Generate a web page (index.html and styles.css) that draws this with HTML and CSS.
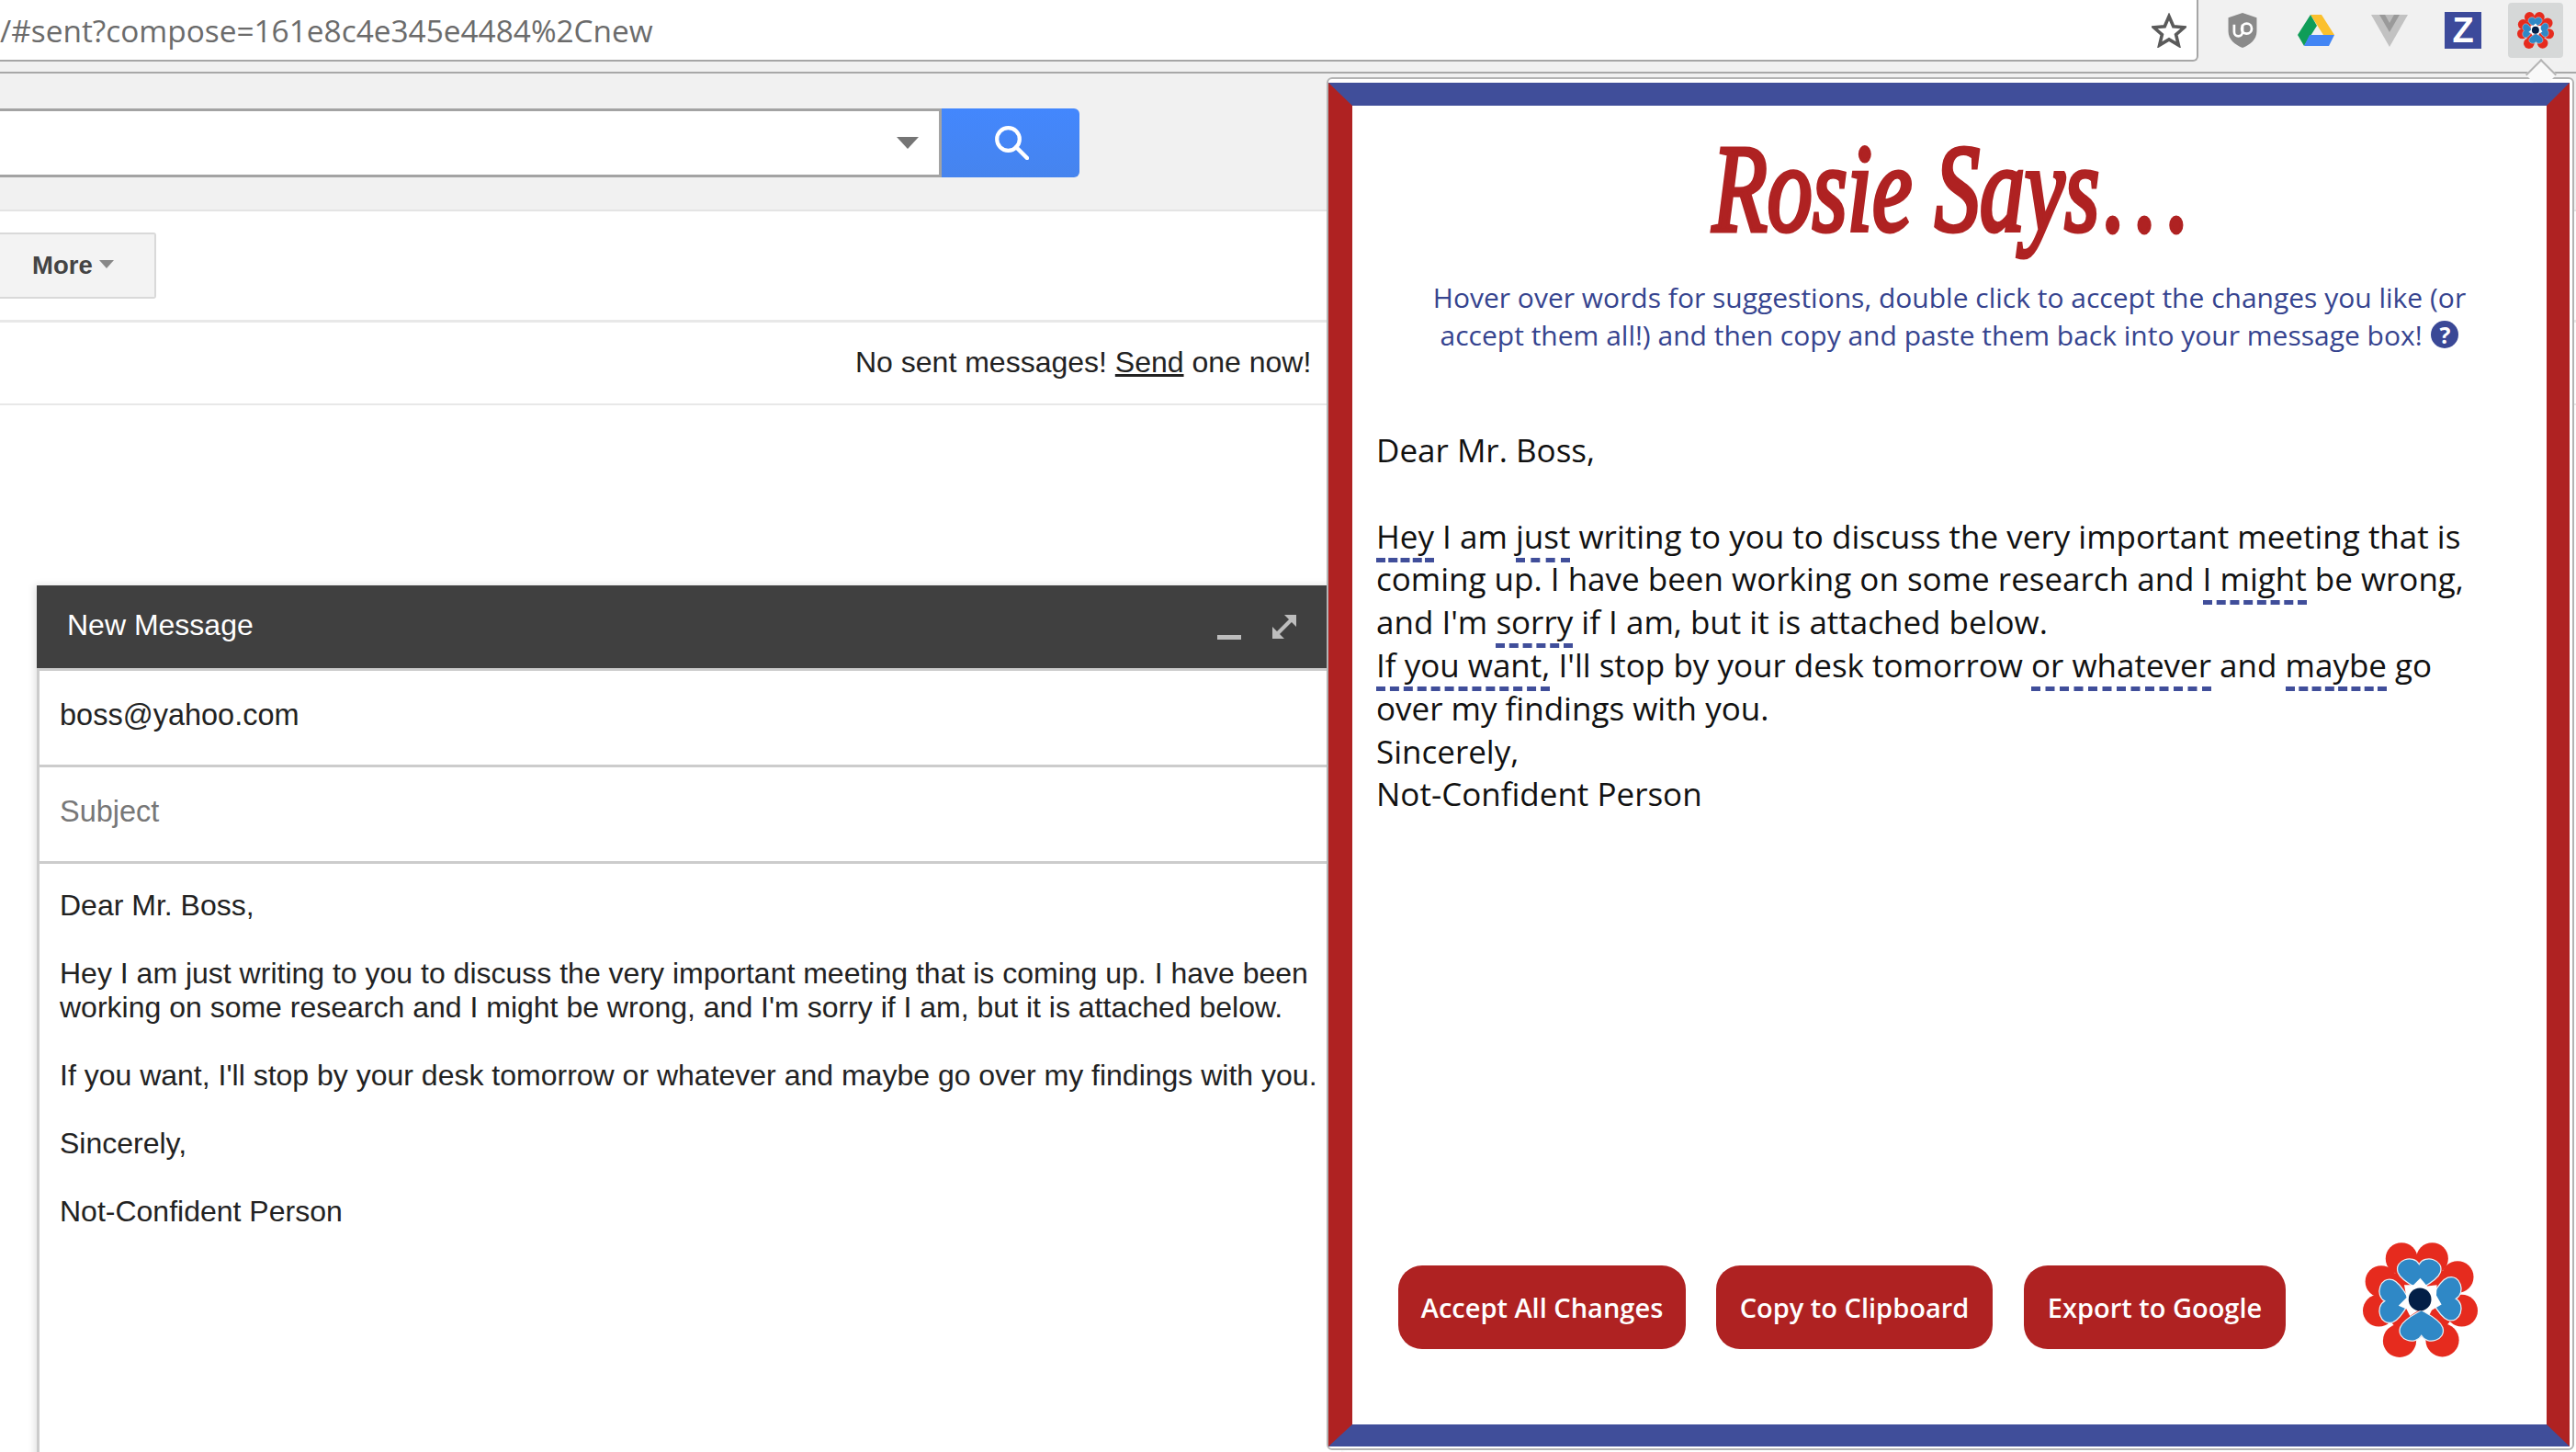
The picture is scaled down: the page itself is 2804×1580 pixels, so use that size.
FILE: index.html
```html
<!DOCTYPE html>
<html lang="en">
<head>
<meta charset="utf-8">
<title>Rosie Says</title>
<link rel="stylesheet" href="styles.css">
</head>
<body>
<div class="page">
  <header class="chrome">
    <div class="omnibox">
      <span class="url">/#sent?compose=161e8c4e345e4484%2Cnew</span>
      <svg class="star" viewBox="0 0 40 40"><path d="M20 4l5 11.500 12.500 1.100-9.500 8.200 2.900 12.200L20 30.500 9.100 37l2.900-12.200-9.500-8.200L15 15.500z" fill="none" stroke="#5a5a5a" stroke-width="3.800"/></svg>
    </div>
    <div class="ext-icons">
      <svg class="ext" viewBox="0 0 40 44"><path d="M20 1l17 6v16c0 10-8 16-17 20C11 39 3 33 3 23V7z" fill="#8a8a8a"/><path d="M10 15v9a5 5 0 0 0 10 0v-9" fill="none" stroke="#fff" stroke-width="3"/><circle cx="25" cy="20" r="6" fill="none" stroke="#fff" stroke-width="3"/></svg>
      <svg class="ext" viewBox="0 0 40 36"><path d="M14 1h12l14 22h-12z" fill="#fbc02d"/><path d="M14 1L0 23l7 12 14-22z" fill="#0f9d58"/><path d="M13 23h27l-6 12H7z" fill="#4285f4"/></svg>
      <svg class="ext" viewBox="0 0 40 36"><path d="M0 1h40L20 36z" fill="#c2c2c2"/><path d="M9 1h22L20 20z" fill="#9a9a9a"/><path d="M15 1h10l-5 9z" fill="#bcbcbc"/></svg>
      <div class="ext-z">Z</div>
      <div class="ext-active">
        <svg class="flower-small" viewBox="0 0 100 100"><use href="#flower"/></svg>
      </div>
    </div>
  </header>
  <div class="chrome-strip"></div>
  <section class="search-band">
    <div class="search-input"><span class="search-caret"></span></div>
    <div class="search-btn">
      <svg viewBox="0 0 37 37" class="search-icon"><circle cx="14.500" cy="14.500" r="12.300" fill="none" stroke="#fff" stroke-width="4.200"/><path d="M23 23l12 12" stroke="#fff" stroke-width="4.500" stroke-linecap="round"/></svg>
    </div>
  </section>
  <section class="toolbar">
    <div class="more-btn"><span>More</span><i class="more-caret"></i></div>
  </section>
  <section class="status">
    <p>No sent messages! <a class="send-link">Send</a> one now!</p>
  </section>

  <section class="compose">
    <div class="compose-head">
      <span>New Message</span>
      <div class="compose-tools">
        <i class="tool-min"></i>
        <svg class="tool-exp" viewBox="0 0 26 26"><path d="M13 0h13v13zM0 13v13h13z" fill="#bdbdbd"/><path d="M6 20L20 6" stroke="#bdbdbd" stroke-width="4"/></svg>
      </div>
    </div>
    <div class="compose-row">boss@yahoo.com</div>
    <div class="compose-row placeholder">Subject</div>
    <div class="compose-body">
      <p>Dear Mr. Boss,</p>
      <p>Hey I am just writing to you to discuss the very important meeting that is coming up. I have been working on some research and I might be wrong, and I'm sorry if I am, but it is attached below.</p>
      <p>If you want, I'll stop by your desk tomorrow or whatever and maybe go over my findings with you.</p>
      <p>Sincerely,</p>
      <p>Not-Confident Person</p>
    </div>
  </section>

  <aside class="popup">
    <div class="popup-nub"></div>
    <div class="popup-frame">
      <h1 class="rosie-title"><span class="rosie-word">Rosie Says<span class="rosie-dots">...</span></span></h1>
      <p class="rosie-hint">Hover over words for suggestions, double click to accept the changes you like (or accept them all!) and then copy and paste them back into your message box! <span class="help">?</span></p>
      <div class="rosie-text">
        <p class="greeting">Dear Mr. Boss,</p>
        <p>
          <u class="flag">Hey</u> I am <u class="flag">just</u> writing to you to discuss the very important meeting that is coming up. I have been working on some research and <u class="flag">I might</u> be wrong, and I'm <u class="flag">sorry</u> if I am, but it is attached below.<br>
          <u class="flag">If you want,</u> I'll stop by your desk tomorrow <u class="flag">or whatever</u> and <u class="flag">maybe</u> go over my findings with you.<br>
          Sincerely,<br>
          Not-Confident Person
        </p>
      </div>
      <div class="rosie-actions">
        <button class="rosie-btn btn-accept">Accept All Changes</button>
        <button class="rosie-btn btn-copy">Copy to Clipboard</button>
        <button class="rosie-btn btn-export">Export to Google</button>
        <svg class="flower-big" viewBox="0 0 100 100"><use href="#flower"/></svg>
      </div>
    </div>
  </aside>
</div>

<svg class="defs" aria-hidden="true">
  <defs>
    <g id="flower">
      <g fill="#e62b1e">
        <circle cx="33.700" cy="14" r="13.900"/><circle cx="60.400" cy="14" r="13.900"/>
        <circle cx="82.500" cy="30" r="13.900"/><circle cx="86.100" cy="59.300" r="13.900"/>
        <circle cx="69.200" cy="85" r="14.500"/><circle cx="32" cy="85.500" r="14.500"/>
        <circle cx="16" cy="34" r="13.900"/><circle cx="13.900" cy="59.300" r="13.900"/>
        <circle cx="50" cy="50" r="32"/>
      </g>
      <g fill="#2f88c6" stroke="#e8f0f6" stroke-width="1">
        <path d="M49 41C44 38 33 33 30.500 26 27 15 44 10 49 19 54 10 71 15 67.500 26 65 33 54 38 49 41z"/>
        <path transform="rotate(90 50 50)" d="M49 41C44 38 33 33 30.500 26 27 15 44 10 49 19 54 10 71 15 67.500 26 65 33 54 38 49 41z"/>
        <path transform="rotate(180 50 50)" d="M49 41C44 38 33 33 30.500 26 27 15 44 10 49 19 54 10 71 15 67.500 26 65 33 54 38 49 41z"/>
        <path transform="rotate(270 50 50)" d="M49 41C44 38 33 33 30.500 26 27 15 44 10 49 19 54 10 71 15 67.500 26 65 33 54 38 49 41z"/>
      </g>
      <path d="M50 31L56 38 64.500 37 64 46 68.500 54 60 59 58 63 50 58 41 64 38 58 31 55 38 48 36 37 44 37z" fill="#fff"/>
      <circle cx="49.700" cy="49.500" r="9.900" fill="#031f47"/>
    </g>
  </defs>
</svg>
</body>
</html>
```
FILE: styles.css
```css
* { box-sizing: border-box; }
html, body { margin: 0; padding: 0; }
body { width: 2804px; height: 1580px; overflow: hidden; background: #fff; font-family: "Liberation Sans", Arial, sans-serif; color: #222; }
p { margin: 0; }
.defs { position: absolute; width: 0; height: 0; }
.page { position: relative; width: 2804px; height: 1580px; overflow: hidden; }

.chrome { display: flex; height: 67px; background: #f1f1f1; }
.omnibox { width: 2393px; height: 67px; background: #fff; border: solid #a6a6a6; border-width: 0 2px 2px 0; border-radius: 0 0 6px 0; display: flex; align-items: center; justify-content: space-between; padding: 0 11px 0 0; }
.url { font-family: "Open Sans", sans-serif; font-size: 33.400px; color: #6b6b6b; }
.star { width: 38px; height: 38px; }
.ext-icons { flex: 1; display: flex; align-items: flex-start; }
.ext { width: 40px; height: 40px; margin: 13px 0 0 0; }
.ext-icons .ext:nth-child(1) { margin-left: 28px; }
.ext-icons .ext:nth-child(2) { margin-left: 40px; }
.ext-icons .ext:nth-child(3) { margin-left: 40px; }
.ext-z { width: 40px; height: 40px; margin: 13px 0 0 40px; background: #3c4a9b; color: #fff; font-weight: 700; font-size: 38px; line-height: 40px; text-align: center; }
.ext-active { width: 60px; height: 60px; margin: 3px 0 0 29px; background: #d6d8d8; border-radius: 4px; display: flex; align-items: center; justify-content: center; }
.flower-small { width: 40px; height: 40px; }

.chrome-strip { height: 13px; background: #f1f1f1; border-bottom: 2px solid #a8a8a8; }

.search-band { height: 150px; background: #f1f1f1; border-bottom: 2px solid #e4e4e4; padding-top: 38px; display: flex; align-items: flex-start; }
.search-input { width: 1025px; height: 75px; background: #fff; border: solid #a3a3a3; border-width: 3px 3px 3px 0; display: flex; align-items: center; justify-content: flex-end; padding-right: 22px; }
.search-caret { width: 0; height: 0; border-left: 12px solid transparent; border-right: 12px solid transparent; border-top: 13px solid #757575; }
.search-btn { width: 150px; height: 75px; background: linear-gradient(#4387fd, #4684ee); border-radius: 0 6px 6px 0; display: flex; align-items: center; justify-content: center; padding-left: 2px; }
.search-icon { width: 37px; height: 37px; }

.toolbar { height: 121px; border-bottom: 3px solid #e8e8e8; padding-top: 23px; }
.more-btn { width: 170px; height: 72px; background: #f3f3f3; border: solid #d9d9d9; border-width: 2px 2px 2px 0; border-radius: 0 3px 3px 0; display: flex; align-items: center; padding-left: 35px; font-size: 27.500px; font-weight: 700; color: #444; gap: 7px; }
.more-caret { width: 0; height: 0; border-left: 8px solid transparent; border-right: 8px solid transparent; border-top: 9px solid #888; margin-bottom: 3px; }

.status { height: 90px; border-bottom: 2px solid #e8e8e8; display: flex; align-items: center; padding: 0 0 2px 931px; font-size: 32px; color: #222; }
.send-link { text-decoration: underline; text-decoration-thickness: 3px; }

.compose { position: absolute; left: 40px; top: 637px; width: 1420px; height: 960px; background: #fff; border-left: 3px solid #ccc; box-shadow: -2px 0 8px rgba(0,0,0,.12); }
.compose-head { height: 90px; margin-left: -3px; background: #404040; color: #fff; font-size: 32px; display: flex; align-items: center; justify-content: space-between; padding: 0 49px 4px 33px; }
.compose-tools { display: flex; align-items: flex-end; gap: 34px; margin-top: 4px; }
.tool-min { display: block; width: 26px; height: 5px; background: #bdbdbd; margin-bottom: -1px; }
.tool-exp { width: 26px; height: 26px; }
.compose-row { height: 105px; border-top: 3px solid #ccc; display: flex; align-items: center; padding: 0 0 5px 22px; font-size: 32.500px; color: #222; }
.compose-row.placeholder { color: #777; }
.compose-body { border-top: 3px solid #ccc; padding: 27px 0 0 22px; font-size: 32px; line-height: 37px; color: #222; display: flex; flex-direction: column; gap: 37px; }

.popup { position: absolute; left: 1444px; top: 84px; width: 1358px; height: 1494px; background: #fff; border: 2px solid #b4b4b4; border-radius: 6px; padding: 4px 3px 4px 0; }
.popup-nub { position: absolute; right: 22px; top: -17px; width: 24px; height: 24px; background: #f9f9f9; border: solid #b4b4b4; border-width: 2px 0 0 2px; transform: rotate(45deg); }
.popup-frame { position: relative; height: 1484px; border-style: solid; border-width: 25px 25px 24px 26px; border-color: #404e9a #af2222; background: #fff; display: flex; flex-direction: column; }
.rosie-title { margin: 20px 0 0; height: 140px; text-align: center; font-family: "Liberation Serif", serif; font-style: italic; font-weight: 400; font-size: 136px; line-height: 140px; color: #af2222; -webkit-text-stroke: 5px #af2222; }
.rosie-word { display: inline-block; transform: translateX(7px) scaleX(.72); }
.rosie-dots { letter-spacing: 14px; margin-left: 6px; }
.rosie-hint { margin: 28px 40px 0; text-align: center; font-family: "Open Sans", sans-serif; font-size: 30px; line-height: 41px; color: #36448f; }
.help { display: inline-flex; width: 30px; height: 30px; border-radius: 50%; background: #3a4896; color: #fff; font-weight: 700; font-size: 25px; line-height: 30px; align-items: center; justify-content: center; vertical-align: 2px; margin-left: 2px; }
.rosie-text { margin: 82px 74px 0 26px; font-family: "Open Sans", sans-serif; font-size: 35px; line-height: 46.800px; color: #111; flex: 1; }
.greeting { margin-bottom: 46.800px; }
.flag { text-decoration: none; border-bottom: 5px dashed #404e9a; }
.rosie-actions { display: flex; align-items: center; padding: 0 0 57px 50px; }
.rosie-btn { height: 91px; border: 0; border-radius: 26px; background: #af2222; color: #fff; font-family: "Open Sans", sans-serif; font-weight: 600; font-size: 29px; padding: 0; }
.btn-accept { width: 313px; margin-right: 33px; }
.btn-copy { width: 301px; margin-right: 34px; }
.btn-export { width: 285px; margin-right: 84px; }
.flower-big { width: 125px; height: 125px; margin-bottom: 16px; }
```
